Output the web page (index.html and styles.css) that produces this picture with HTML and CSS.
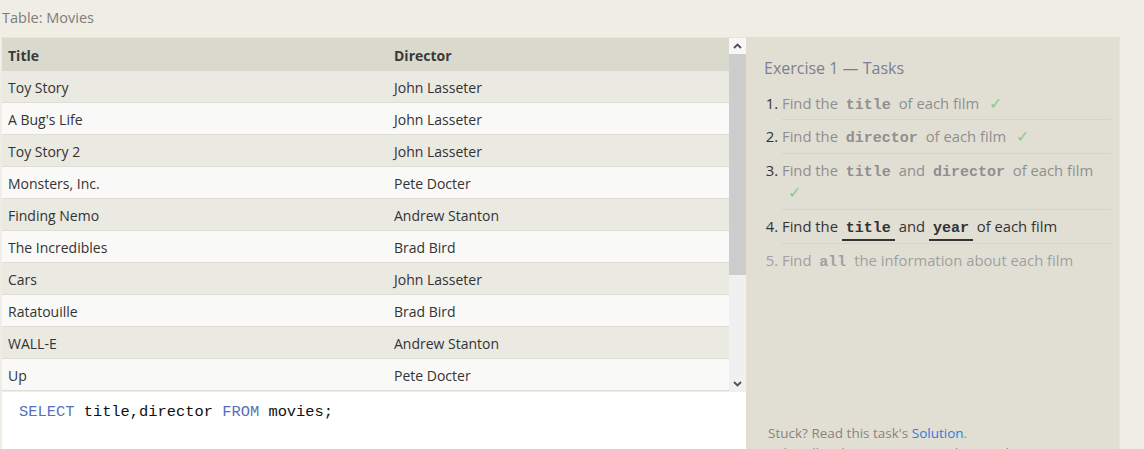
FILE: index.html
```html
<!DOCTYPE html>
<html>
<head>
<meta charset="utf-8">
<link rel="stylesheet" href="styles.css">
</head>
<body>
<div class="caption">Table: Movies</div>
<div class="main">
  <div class="table-area">
    <div class="grid">
      <div class="table">
        <div class="row head"><div class="c1">Title</div><div class="c2">Director</div></div>
        <div class="row odd"><div class="c1">Toy Story</div><div class="c2">John Lasseter</div></div>
        <div class="row even"><div class="c1">A Bug's Life</div><div class="c2">John Lasseter</div></div>
        <div class="row odd"><div class="c1">Toy Story 2</div><div class="c2">John Lasseter</div></div>
        <div class="row even"><div class="c1">Monsters, Inc.</div><div class="c2">Pete Docter</div></div>
        <div class="row odd"><div class="c1">Finding Nemo</div><div class="c2">Andrew Stanton</div></div>
        <div class="row even"><div class="c1">The Incredibles</div><div class="c2">Brad Bird</div></div>
        <div class="row odd"><div class="c1">Cars</div><div class="c2">John Lasseter</div></div>
        <div class="row even"><div class="c1">Ratatouille</div><div class="c2">Brad Bird</div></div>
        <div class="row odd"><div class="c1">WALL-E</div><div class="c2">Andrew Stanton</div></div>
        <div class="row even"><div class="c1">Up</div><div class="c2">Pete Docter</div></div>
      </div>
      <div class="scrollbar">
        <div class="sb-btn"><svg width="9" height="6" viewBox="0 0 9 6"><path d="M1 5 L4.5 1.5 L8 5" fill="none" stroke="#505050" stroke-width="1.8"/></svg></div>
        <div class="sb-thumb"></div>
        <div class="sb-track"></div>
        <div class="sb-btn"><svg width="9" height="6" viewBox="0 0 9 6"><path d="M1 1 L4.5 4.5 L8 1" fill="none" stroke="#505050" stroke-width="1.8"/></svg></div>
      </div>
    </div>
    <div class="editor"><span class="kw">SELECT</span> title,director <span class="kw">FROM</span> movies;</div>
  </div>
  <div class="panel">
    <div class="panel-title">Exercise 1 — Tasks</div>
    <ol class="tasks">
      <li class="done"><span class="t">Find the <code>title</code> of each film</span> <span class="check">✓</span></li>
      <li class="done"><span class="t">Find the <code>director</code> of each film</span> <span class="check">✓</span></li>
      <li class="done"><span class="t">Find the <code>title</code> and <code>director</code> of each film</span> <span class="check">✓</span></li>
      <li class="current"><span class="t">Find the <code>title</code> and <code>year</code> of each film</span></li>
      <li class="todo"><span class="t">Find <code>all</code> the information about each film</span></li>
    </ol>
    <p class="stuck">Stuck? Read this task's <a href="#">Solution</a>.<br>Solve all tasks to continue to the next lesson.</p>
  </div>
</div>
</body>
</html>
```
FILE: styles.css
```css
html, body {
  margin: 0;
  padding: 0;
}
body {
  background: #f0ede5;
  font-family: "Open Sans", "Noto Sans", sans-serif;
  color: #333;
  overflow: hidden;
}
.caption {
  font-size: 14.5px;
  line-height: 20px;
  color: #7c7c7c;
  padding: 8px 0 0 2px;
  height: 28px;
  box-sizing: border-box;
}
.main {
  display: flex;
  margin: 9px 0 0 2px;
  align-items: stretch;
}
.table-area {
  width: 744px;
  display: flex;
  flex-direction: column;
  border-top: 1px solid #e6e4dc;
}
.grid {
  display: flex;
  height: 354px;
}
.table {
  flex: 1;
  display: flex;
  flex-direction: column;
}
.row {
  display: flex;
  height: 32px;
  box-sizing: border-box;
  align-items: center;
  font-size: 14px;
  padding-top: 2px;
  border-bottom: 1px solid #dfddd5;
}
.row.head {
  height: 33px;
  background: #dad9cd;
  font-weight: 700;
  color: #3a3a3a;
  border-bottom: none;
  padding-top: 1px;
}
.row.odd { background: #eae9e2; }
.row.even { background: #f9f9f8; }
.c1 {
  width: 386px;
  padding-left: 6px;
}
.c2 { flex: 1; }
.scrollbar {
  width: 17px;
  display: flex;
  flex-direction: column;
  background: #f0f0f0;
}
.sb-btn {
  height: 16px;
  display: flex;
  align-items: center;
  justify-content: center;
  background: #f0f0f0;
}
.sb-btn:first-child { background: #f7f7f7; }
.sb-thumb {
  height: 221px;
  background: #cdcdcd;
}
.sb-track { flex: 1; }
.editor {
  background: #fff;
  height: 100px;
  box-sizing: border-box;
  padding: 10px 0 0 17px;
  font-family: "Liberation Mono", monospace;
  font-size: 15.4px;
  line-height: 20px;
  color: #111;
}
.kw { color: #5671b8; }
.panel {
  background: #e1dfd4;
  border-right: 1px solid #e6e4da;
  padding: 19px 8px 0 18px;
  box-sizing: border-box;
  width: 374px;
}
.panel-title {
  font-size: 16px;
  line-height: 24px;
  color: #7b8091;
}
.tasks {
  margin: 7px 0 0 0;
  padding: 0 0 0 18px;
  font-size: 14.8px;
  line-height: 22px;
}
.tasks li {
  padding: 5px 0 6px;
  border-bottom: 1px solid #d6d4c8;
}
.tasks li:first-child { padding-bottom: 5px; }
.tasks li:last-child { border-bottom: none; }
.tasks li::marker { color: #333; }
.tasks code {
  font-family: "Liberation Mono", monospace;
  font-weight: 700;
  font-size: 15px;
  line-height: 1;
  padding: 0 4px;
}
.done .t { color: #8f8f8f; }
.done code { color: #8f8f8f; }
.check {
  color: #8cc98c;
  font-size: 16px;
  margin-left: 6px;
}
.current .t { color: #333; }
.current code {
  color: #333;
  border-bottom: 2px solid #333;
  padding-bottom: 2px;
}
.todo .t, .todo code { color: #a0a0a0; }
.tasks li.todo::marker { color: #a0a0a0; }
.stuck {
  margin: 146px 0 0 4px;
  font-size: 13.5px;
  line-height: 20px;
  color: #8a8478;
}
.stuck a {
  color: #2f7be0;
  text-decoration: none;
}
```
